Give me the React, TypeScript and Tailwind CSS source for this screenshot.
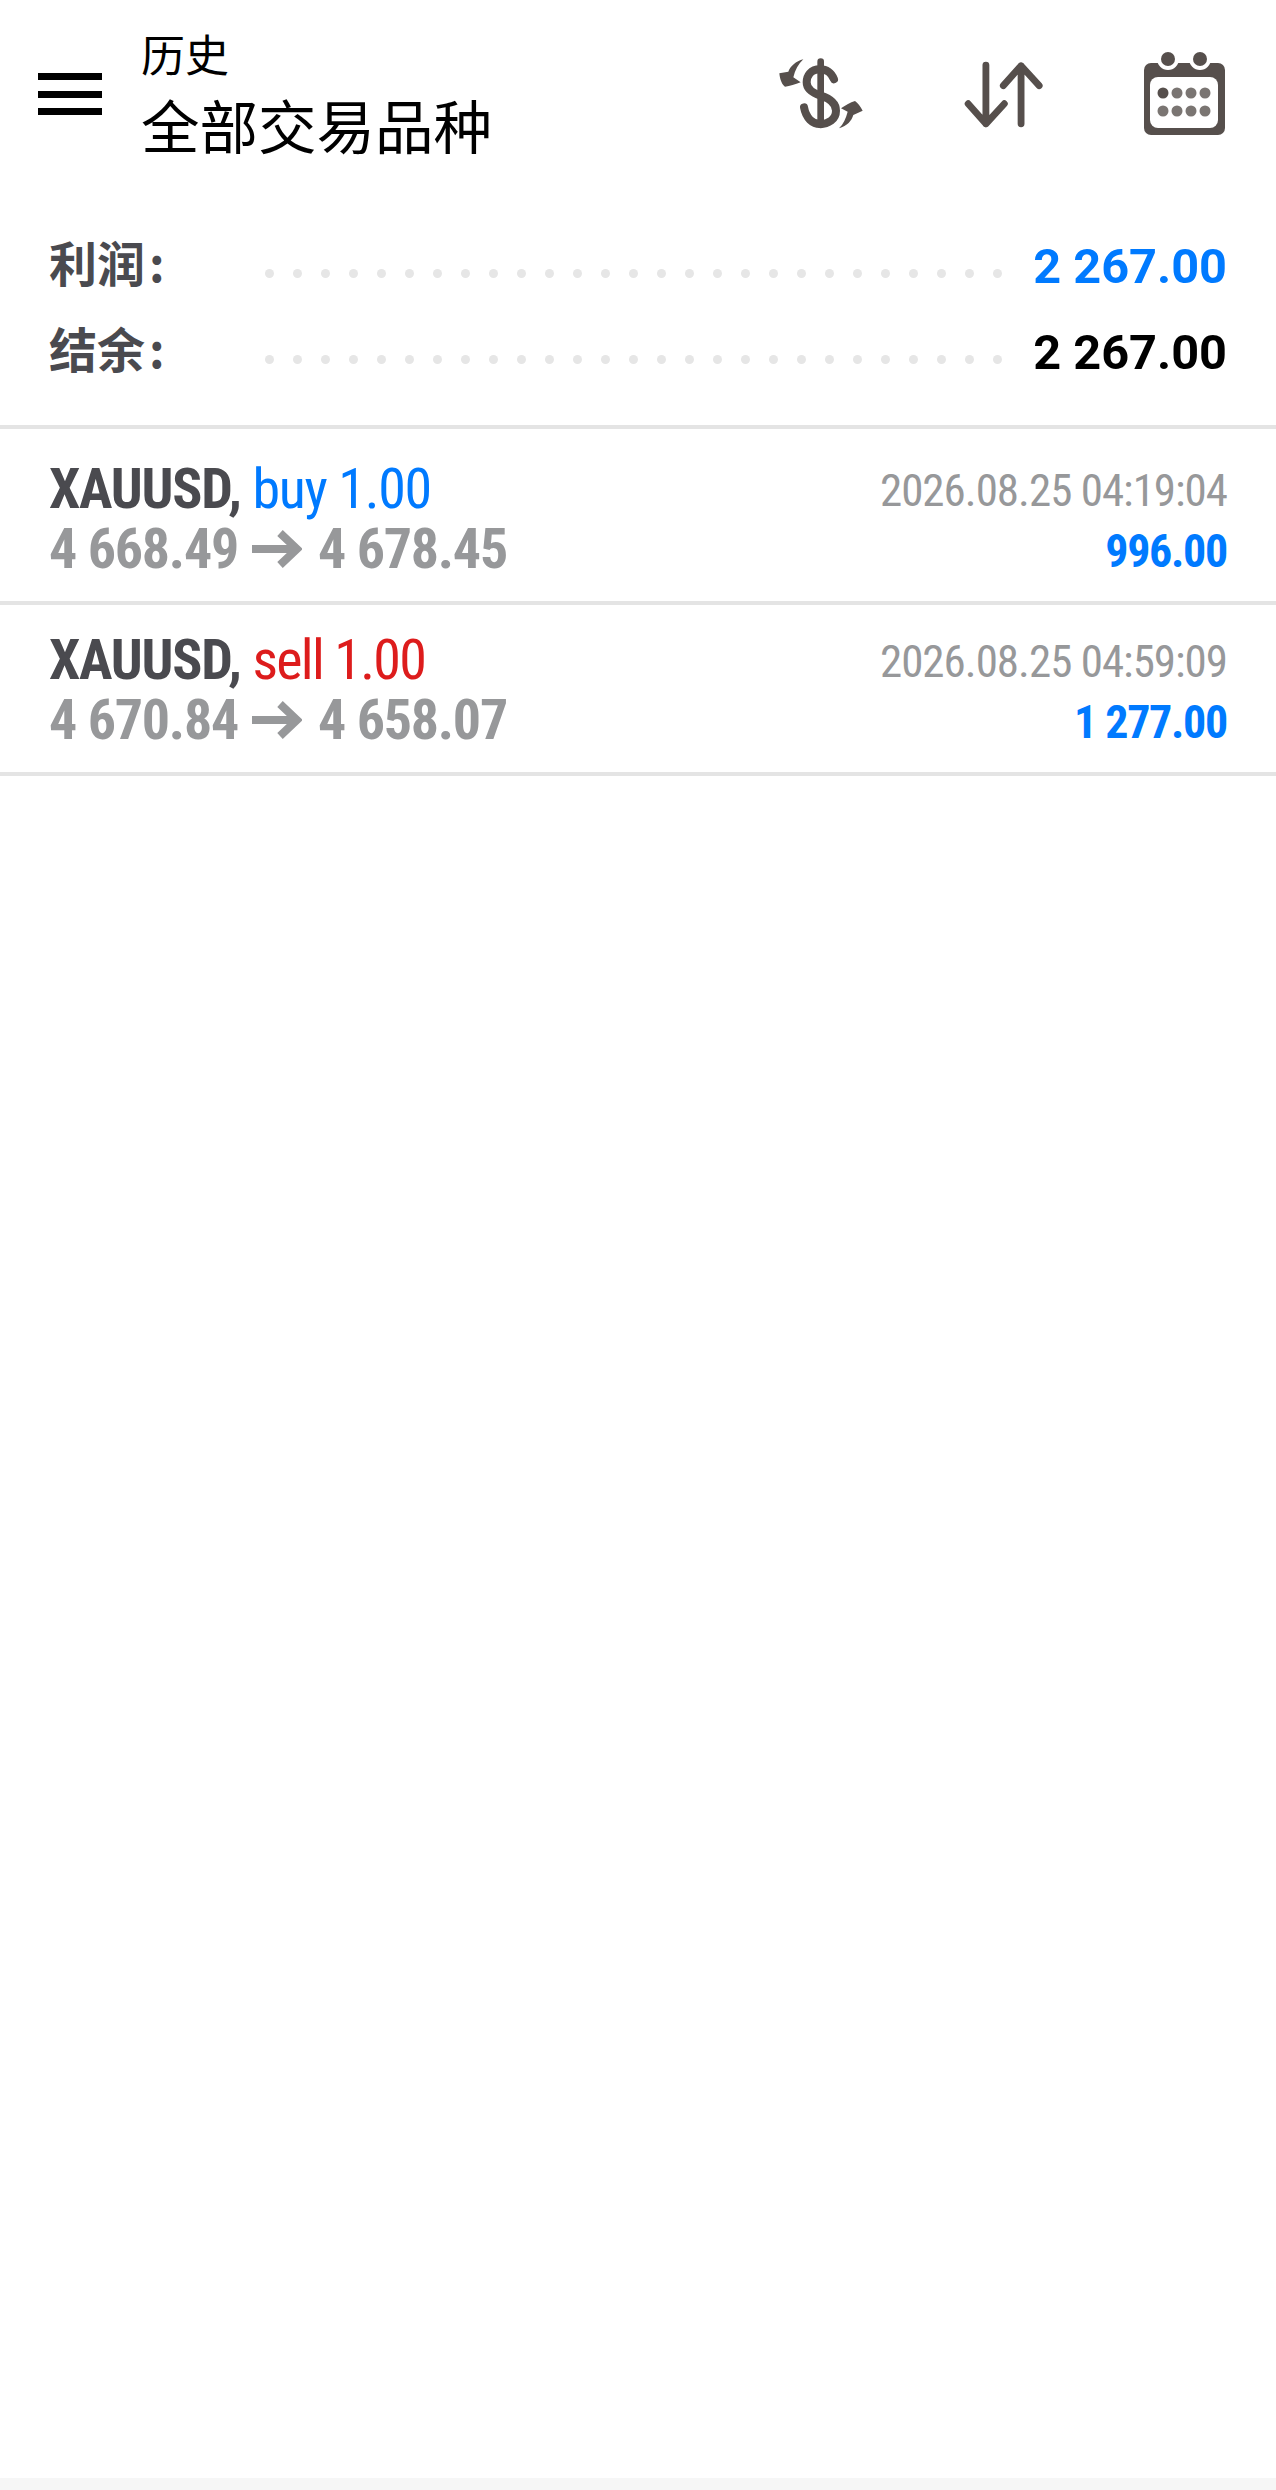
const DOTS = Array.from({ length: 27 }, (_, i) => i)

const TRADES = [
  { side: 'buy 1.00', sideColor: 'text-[#007aff]', route: ['4 668.49', '4 678.45'], time: '2026.08.25 04:19:04', profit: '996.00', height: 'h-[176px]' },
  { side: 'sell 1.00', sideColor: 'text-[#dd1c1c] tracking-[-1.7px]', route: ['4 670.84', '4 658.07'], time: '2026.08.25 04:59:09', profit: '1 277.00', height: 'h-[171px]' },
]

function DollarIcon() {
  return (
    <svg width="100" height="90" viewBox="0 0 300 270" fill="none">
      <path d="M152 35V225" stroke="#564f4c" strokeWidth="20" strokeLinecap="round" />
      <path d="M192 88C184 68 168 58 150 58C122 58 110 78 110 97C110 120 130 130 152 137C180 146 198 160 198 182C198 208 175 222 150 222C128 222 108 205 102 172" stroke="#564f4c" strokeWidth="24" strokeLinecap="round" />
      <path d="M100 28C78 33 60 50 55 65L28 70C30 90 37 105 45 110C60 108 75 103 92 97L70 82C75 60 85 42 100 28Z" fill="#564f4c" />
      <path d="M207 235C232 228 245 212 250 195L278 182C272 170 263 158 255 153C240 157 228 165 213 175L233 185C228 205 220 222 207 235Z" fill="#564f4c" />
    </svg>
  )
}

function SortIcon() {
  return (
    <svg width="82" height="70" viewBox="650 90 240 205" fill="none" stroke="#564f4c" strokeWidth="20" strokeLinecap="round" strokeLinejoin="round">
      <path d="M717 105V277M665 218L717 277L771 218" />
      <path d="M820 277V107M768 165L820 107L873 165" />
    </svg>
  )
}

function CalendarIcon() {
  return (
    <svg width="82" height="83" viewBox="0 0 82 83">
      <rect x="0" y="11" width="81" height="72" rx="7" fill="#564f4c" />
      <circle cx="24" cy="7" r="11" fill="#fff" />
      <circle cx="56" cy="7" r="11" fill="#fff" />
      <circle cx="24" cy="7" r="7" fill="#564f4c" />
      <circle cx="56" cy="7" r="7" fill="#564f4c" />
      <rect x="6" y="25" width="68" height="51" rx="8" fill="#fff" />
      <circle cx="19" cy="41" r="5.5" fill="#564f4c" />
      {[33, 47, 61].map(x => <circle key={x} cx={x} cy="41" r="5.5" fill="#7a7572" />)}
      {[19, 33, 47, 61].map(x => <circle key={x} cx={x} cy="59" r="5.5" fill="#7a7572" />)}
    </svg>
  )
}

function RouteArrow() {
  return (
    <svg className="ml-[14px] mr-[16px]" width="50" height="40" viewBox="0 0 50 40" fill="none" stroke="#97989a" strokeWidth="8">
      <path d="M0 20H45M28 4L45 20L28 36" />
    </svg>
  )
}

function SummaryRow({ label, value, color }: { label: string; value: string; color: string }) {
  return (
    <div className="flex items-center h-[86px]">
      <div className="w-[216px] mb-[12px] text-[48px] font-bold text-[#4a4a4f] font-['Noto_Sans_CJK_SC',sans-serif]">
        {label}<span className="ml-[4px]">:</span>
      </div>
      <div className="flex gap-[19px] mt-[12px]">
        {DOTS.map(i => <span key={i} className="w-[9px] h-[9px] rounded-full bg-[#e6e6e6]" />)}
      </div>
      <div className={`ml-auto text-[48.7px] font-bold font-['Roboto',sans-serif] ${color}`}>{value}</div>
    </div>
  )
}

export default function App() {
  return (
    <div className="h-[2490px] flex flex-col bg-white font-['Roboto',sans-serif]">
      <header className="h-[186px] flex items-center shrink-0">
        <div className="ml-[38px] mt-[2px] w-[64px] h-[42px] flex flex-col justify-between">
          <span className="h-[7px] bg-black" />
          <span className="h-[7px] bg-black" />
          <span className="h-[7px] bg-black" />
        </div>
        <div className="ml-[39px] mb-[3px] font-['Noto_Sans_CJK_SC',sans-serif] text-black">
          <div className="text-[44px] leading-[64px]">历史</div>
          <div className="text-[58.5px] leading-[78px]">全部交易品种</div>
        </div>
        <div className="ml-auto mr-[50px] flex items-center">
          <div className="mt-[4px]"><DollarIcon /></div>
          <div className="ml-[93px] mt-[4px]"><SortIcon /></div>
          <div className="ml-[99px]"><CalendarIcon /></div>
        </div>
      </header>

      <section className="px-[49px] h-[239px] shrink-0 pt-[38px]">
        <SummaryRow label="利润" value="2 267.00" color="text-[#007aff]" />
        <SummaryRow label="结余" value="2 267.00" color="text-black" />
      </section>

      <div className="border-t-4 border-[#e4e4e4]">
        {TRADES.map(t => (
          <div key={t.time} className={`${t.height} px-[49px] pb-[22px] border-b-4 border-[#e4e4e4] flex justify-between items-end`}>
            <div className="[font-stretch:75%] text-[56px] leading-[60px] tracking-[-1.25px]">
              <div>
                <span className="font-bold text-[#4a4a4f]">XAUUSD, </span>
                <span className={t.sideColor}>{t.side}</span>
              </div>
              <div className="flex items-center font-bold text-[#97989a]">
                {t.route[0]}
                <RouteArrow />
                {t.route[1]}
              </div>
            </div>
            <div className="text-right [font-stretch:75%] leading-[61px] -mb-[3px]">
              <div className="text-[45px] tracking-[-1px] text-[#97989a]">{t.time}</div>
              <div className="text-[46px] tracking-[-1.3px] font-bold text-[#007aff]">{t.profit}</div>
            </div>
          </div>
        ))}
      </div>

      <div className="flex-1" />
      <div className="h-[12px] bg-[#f6f6f6] shrink-0" />
    </div>
  )
}
